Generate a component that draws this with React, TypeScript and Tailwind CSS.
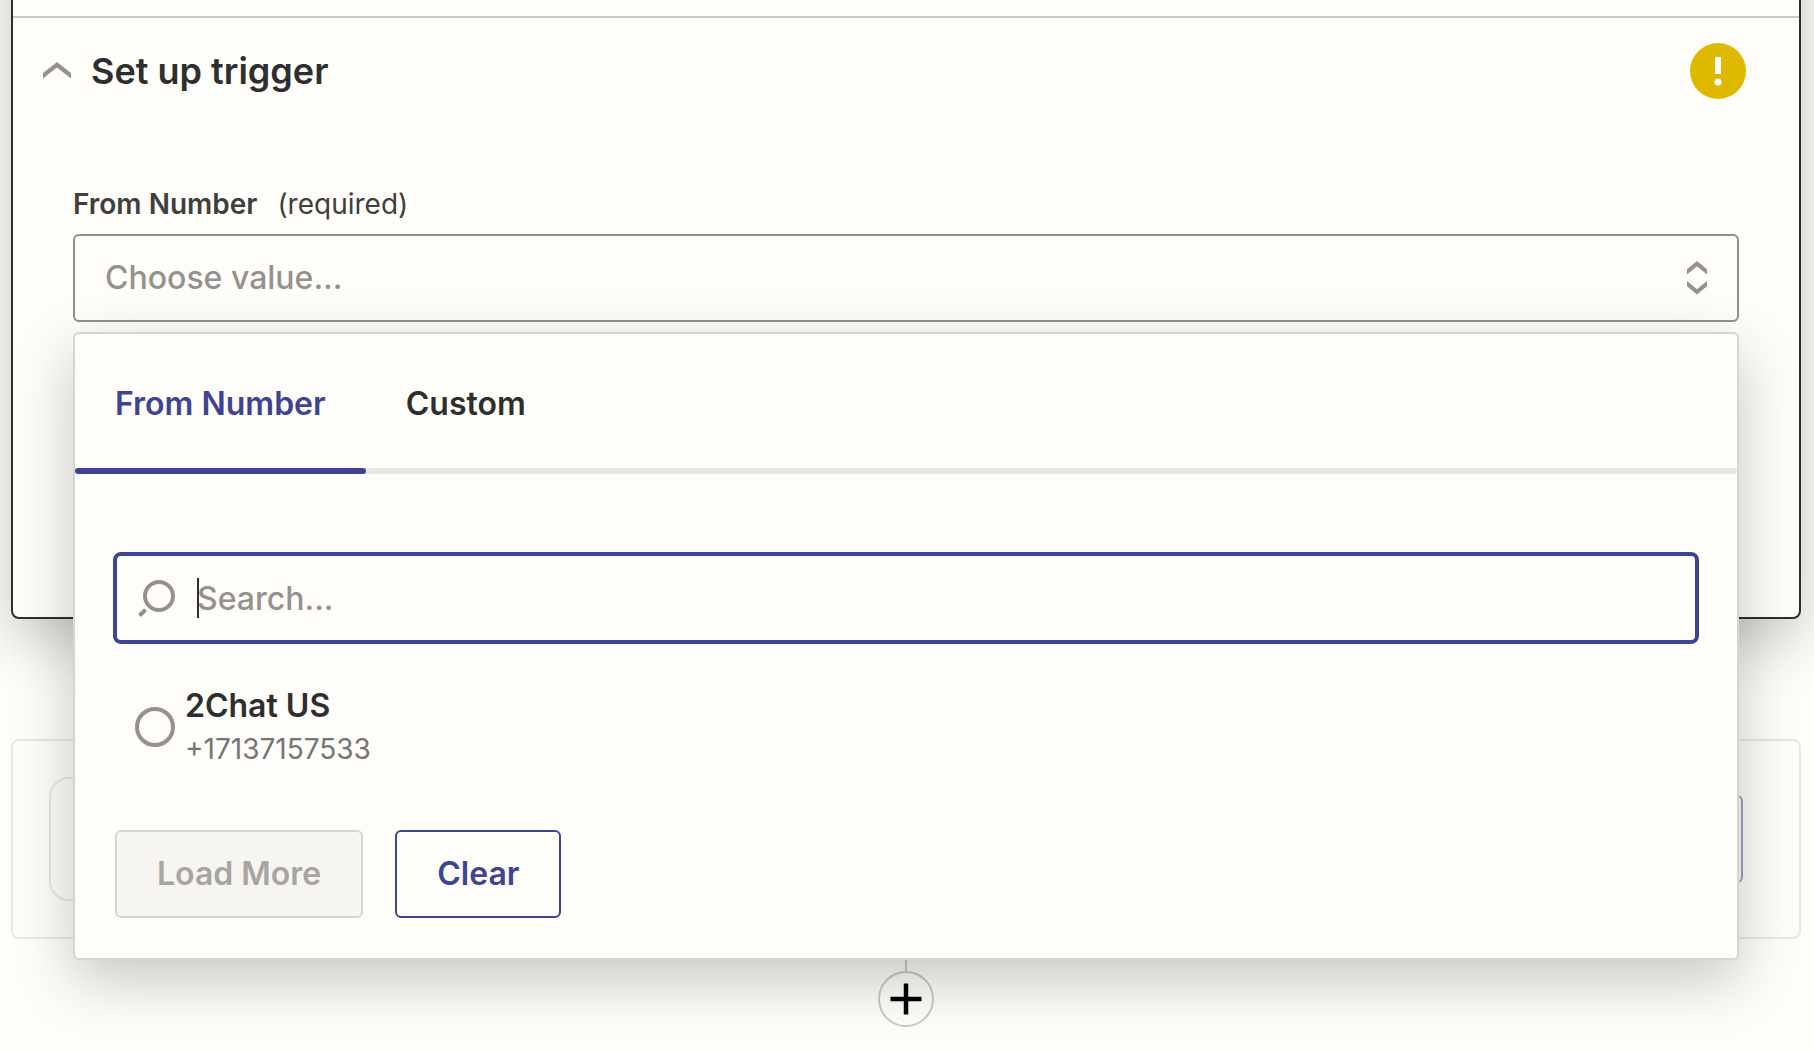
import { useState } from "react";

function ChevronUp() {
  return (
    <svg width="28" height="18" viewBox="0 0 28 18" fill="#95928e" aria-hidden="true">
      <path d="M14 0 28 11v5.500L14 5.500 0 16.500V11z" />
    </svg>
  );
}

function SelectArrows() {
  return (
    <svg width="20" height="34" viewBox="0 0 20 34" fill="#95928e" aria-hidden="true">
      <path d="M10 0 20 8.200v5.300L10 5.300 0 13.500V8.200z" />
      <path d="M10 33.500 20 25.300V20L10 28.200 0 20v5.300z" />
    </svg>
  );
}

function WarningBadge() {
  return (
    <svg width="56" height="56" viewBox="0 0 56 56" role="img" aria-label="Needs attention">
      <circle cx="28" cy="28" r="28" fill="#dfb900" />
      <path d="M25 14h6v17h-6z" fill="#fffdf9" />
      <circle cx="28" cy="39" r="3.500" fill="#fffdf9" />
    </svg>
  );
}

function SearchIcon() {
  return (
    <svg width="38" height="38" viewBox="0 0 38 38" fill="none" stroke="#95928e" strokeWidth="4" aria-hidden="true">
      <circle cx="22" cy="17" r="14" />
      <path d="M2.500 36.500 8.500 30.700" />
    </svg>
  );
}

function PlusIcon() {
  return (
    <svg width="32" height="32" viewBox="0 0 32 32" stroke="#000" strokeWidth="4.500" aria-hidden="true">
      <path d="M.5 16h31M16 .5v31" />
    </svg>
  );
}

const numbers = [{ id: "us", name: "2Chat US", phone: "+17137157533" }];

function ValueMenu() {
  const [query, setQuery] = useState("");
  return (
    <div className="absolute inset-x-0 top-full z-10 mt-[10px] rounded-md border-2 border-[#d7d5d2] bg-[#fffdf9] shadow-[0_20px_60px_rgba(0,0,0,0.22)]">
      <div role="tablist" className="relative flex">
        <div className="absolute inset-x-0 bottom-0 h-1.5 rounded-full bg-[#e8e7e4]" />
        <button role="tab" aria-selected="true" className="relative h-[140px] px-10 text-[32px] font-semibold text-[#3d4592]">
          From Number
          <span className="absolute inset-x-0 bottom-0 h-1.5 rounded-full bg-[#3d4592]" />
        </button>
        <button role="tab" aria-selected="false" className="h-[140px] px-10 text-[32px] font-semibold text-[#2d2e2e]">
          Custom
        </button>
      </div>

      <div className="px-10 pt-[78px] pb-10">
        <label className="relative -mx-0.5 flex h-[92px] items-center gap-[22px] rounded-lg border-4 border-[#3d4592] px-5">
          <SearchIcon />
          <span className="relative flex grow items-center">
            <span className="absolute left-0 h-10 w-0.5 bg-[#2d2e2e]" />
            <input
              type="text"
              aria-label="Search"
              placeholder="Search..."
              value={query}
              onChange={(e) => setQuery(e.target.value)}
              className="h-[50px] w-full bg-transparent text-[32px] font-medium text-[#2d2e2e] caret-transparent outline-none placeholder:text-[#95928e]"
            />
          </span>
        </label>

        <div className="pt-10 pb-[60px]">
          {numbers.map((n) => (
            <label key={n.id} className="flex items-center gap-2.5 pl-5">
              <input type="radio" name="from-number" className="size-10 appearance-none rounded-full border-4 border-[#95928e]" />
              <span className="flex flex-col">
                <span className="text-[32px] leading-[44px] font-semibold text-[#2d2e2e]">{n.name}</span>
                <span className="text-[28px] leading-[42px] text-[#757575]">{n.phone}</span>
              </span>
            </label>
          ))}
        </div>

        <div className="flex gap-8">
          <button disabled className="h-[88px] rounded-md border-2 border-[#d7d5d2] bg-[#f6f5f2] px-10 text-[32px] font-semibold text-[#a8a5a0]">
            Load More
          </button>
          <button className="h-[88px] rounded-md border-2 border-[#3d4592] px-10 text-[32px] font-semibold text-[#3d4592]">
            Clear
          </button>
        </div>
      </div>
    </div>
  );
}

function TriggerCard() {
  return (
    <div className="relative z-10 -mt-24 rounded-lg border-2 border-[#2d2e2e] bg-[#fffdf9] pt-[110px] shadow-[0_20px_60px_rgba(0,0,0,0.22)]">
      <section className="border-t-2 border-[#c9c8ca] pt-[25px] pb-[295px]">
        <header className="flex items-center gap-5 pr-[53px] pl-[30px]">
          <button aria-label="Collapse section">
            <ChevronUp />
          </button>
          <h2 className="grow text-[36px] leading-[56px] font-semibold text-[#2d2e2e]">Set up trigger</h2>
          <WarningBadge />
        </header>

        <div className="px-[60px] pt-[87px]">
          <label htmlFor="from-number-select" className="flex gap-5 pb-3 text-[28px] leading-9 text-[#403f3e]">
            <span className="font-semibold">From Number</span>
            <span>(required)</span>
          </label>
          <div className="relative flex items-center justify-end">
            <select
              id="from-number-select"
              className="h-[88px] w-full appearance-none rounded-md border-2 border-[#918f8a] px-[30px] text-[32px] font-medium text-[#95928e]"
            >
              <option>Choose value...</option>
            </select>
            <span className="pointer-events-none absolute right-8">
              <SelectArrows />
            </span>
            <ValueMenu />
          </div>
        </div>
      </section>
    </div>
  );
}

export default function App() {
  return (
    <main className="min-h-screen overflow-hidden bg-[#fffdf9] pr-[13px] pl-[11px] font-['Inter',sans-serif]">
      <TriggerCard />
      <div className="mx-auto h-[120px] w-0.5 bg-[#c9c8c6]" />
      <div className="flex h-[200px] items-center justify-between rounded-lg border-2 border-[#e8e7e4] pr-14 pl-9">
        <div className="size-[124px] rounded-[20px] border-2 border-[#e8e7e4]" />
        <button aria-label="Change action" className="h-[88px] w-40 rounded-md border-2 border-[#3d4592] opacity-50" />
      </div>
      <div className="flex flex-col items-center">
        <div className="h-8 w-0.5 bg-[#c9c8c6]" />
        <button aria-label="Add step" className="flex size-14 items-center justify-center rounded-full border-2 border-[#cbcac8]">
          <PlusIcon />
        </button>
      </div>
    </main>
  );
}
